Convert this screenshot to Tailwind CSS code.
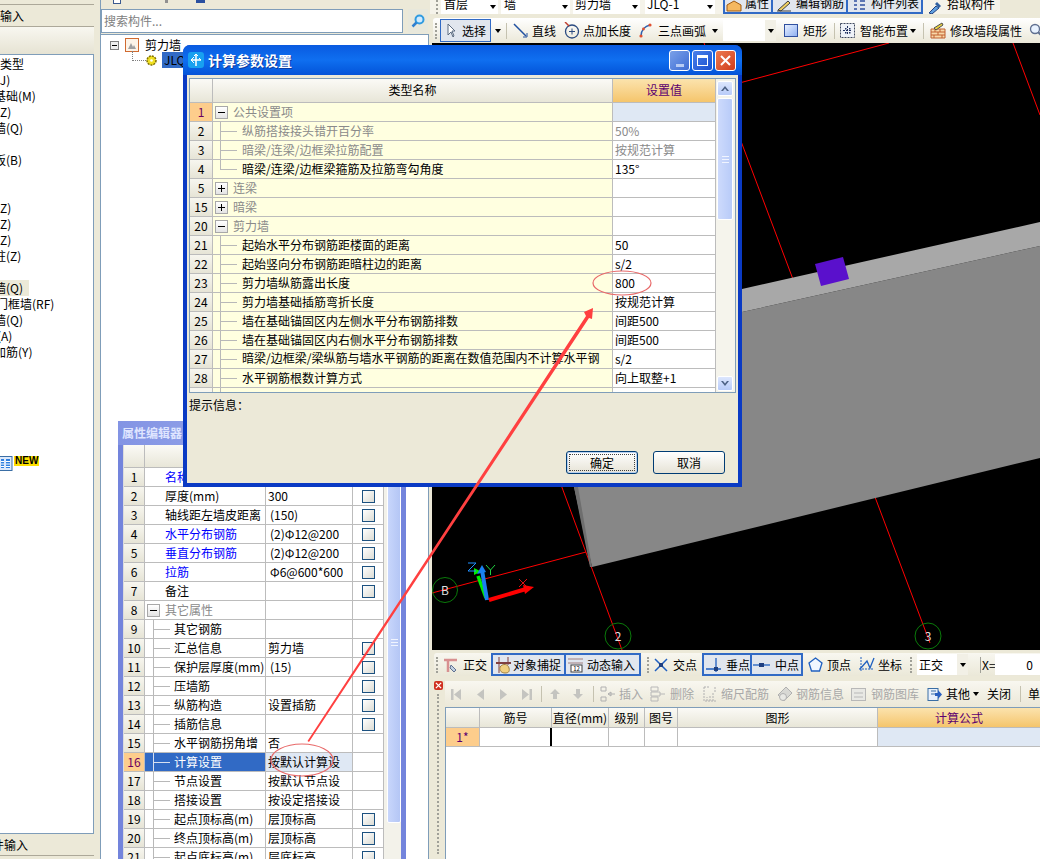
<!DOCTYPE html>
<html lang="zh">
<head>
<meta charset="utf-8">
<title>计算参数设置</title>
<script src="https://cdn.jsdelivr.net/npm/@tailwindcss/browser@4"></script>
</head>
<body>
<div class="relative flex h-[859px] w-[1040px] overflow-hidden bg-[#ece9d8] text-[12px] text-black [font-family:'Noto_Sans_CJK_SC','Liberation_Sans',sans-serif]">

  <!-- left list -->
  <aside class="flex h-full w-[101px] shrink-0">
    <div class="flex w-[94px] flex-col overflow-hidden">
      <div class="h-[5px] shrink-0 border-b border-[#aca899]"></div>
      <div class="h-[22px] shrink-0 border-b border-[#aca899] leading-[21px]">输入</div>
      <div class="h-[27px] shrink-0 bg-linear-to-b from-[#f8f7f0] to-[#e6e3d3]"></div>
      <div class="h-[780px] shrink-0 whitespace-nowrap border border-l-0 border-[#7f9db9] bg-white pt-[1px] leading-[16px]">
        <div class="h-[16px]">类型</div>
        <div class="-ml-[4px] h-[16px]">(J)</div>
        <div class="-ml-[6px] h-[16px]">基础(M)</div>
        <div class="-ml-[4px] h-[16px]">(Z)</div>
        <div class="-ml-[6px] h-[16px]">墙(Q)</div>
        <div class="h-[16px]"></div>
        <div class="-ml-[6px] h-[16px]">板(B)</div>
        <div class="h-[32px]"></div>
        <div class="-ml-[4px] h-[16px]">(Z)</div>
        <div class="-ml-[4px] h-[16px]">(Z)</div>
        <div class="-ml-[4px] h-[16px]">(Z)</div>
        <div class="-ml-[6px] h-[16px]">柱(Z)</div>
        <div class="h-[16px]"></div>
        <div class="h-[16px] w-[29px] overflow-hidden bg-[#ece9d8]"><div class="-ml-[6px]">墙(Q)</div></div>
        <div class="-ml-[4px] h-[16px]">门框墙(RF)</div>
        <div class="-ml-[6px] h-[16px]">墙(Q)</div>
        <div class="-ml-[3px] h-[16px]">(A)</div>
        <div class="-ml-[6px] h-[16px]">加筋(Y)</div>
        <div class="mt-[96px] flex items-start">
          <svg class="h-[15px] w-[13px]" viewBox="0 0 13 15"><rect x="-3" y=".5" width="15" height="14" fill="#dbe8fb" stroke="#3a6ea5"/><path d="M1 3h3v9H1zM6 3h4v9H6z" fill="#2f80e0"/><path d="M1 5.500h3M1 8h3M1 10.500h3M6 5.500h4M6 8h4M6 10.500h4" stroke="#fff"/></svg>
          <span class="ml-[1px] h-[10px] bg-[#ffe000] px-[1px] text-[10px] font-bold leading-[10px] [font-family:'Liberation_Sans',sans-serif]">NEW</span>
        </div>
      </div>
      <div class="h-[22px] shrink-0 border-b border-[#aca899] leading-[21px]"><div class="-ml-[8px]">件输入</div></div>
    </div>
    <div class="w-[7px] border-r border-[#7f9db9]"></div>
  </aside>

  <!-- component tree -->
  <section class="flex h-full w-[329px] shrink-0 flex-col">
    <div class="flex h-[9px] shrink-0 items-start">
      <span class="ml-[12px] h-[4px] w-[8px] border border-t-0 border-[#3a5a90] bg-white"></span>
      <span class="ml-[44px] h-[3px] w-[3px] bg-[#909090]"></span>
      <span class="ml-[28px] h-[3px] w-[9px] bg-[#2a50a0]"></span>
    </div>
    <div class="flex h-[25px] shrink-0">
      <div class="h-[24px] w-[302px] border border-[#7f9db9] bg-white pl-[2px] leading-[22px] text-[#808080]">搜索构件...</div>
      <div class="ml-[5px] flex h-[24px] w-[20px] items-center justify-center bg-[#e8e8dc]">
        <svg class="h-[14px] w-[14px]" viewBox="0 0 14 14"><circle cx="8.500" cy="5.500" r="4" fill="#cfeaff" stroke="#2f9be0" stroke-width="2"/><path d="M5.500 8.500 1.500 12.500" stroke="#2f80d0" stroke-width="2.500"/></svg>
      </div>
    </div>
    <div class="mr-[1px] flex-1 border-r border-t border-[#7f9db9] bg-white">
      <div class="flex h-[17px] items-center pt-[3px]">
        <span class="ml-[9px] flex h-[9px] w-[9px] items-center justify-center border border-[#808080] bg-[#eeeeee]"><span class="h-px w-[5px] bg-black"></span></span>
        <svg class="ml-[6px] h-[14px] w-[14px]" viewBox="0 0 14 14"><rect x=".5" y=".5" width="13" height="13" fill="#fdf4e8" stroke="#d06a30"/><path d="M3 11 6 5l2 4 1-2 2 4z" fill="#a0a0a0"/></svg>
        <span class="ml-[6px]">剪力墙</span>
      </div>
      <div class="flex h-[16px] items-center">
        <span class="ml-[31px] mb-[8px] h-[10px] w-[14px] border-b border-l border-dotted border-[#808080]"></span>
        <svg class="h-[11px] w-[11px]" viewBox="0 0 11 11"><circle cx="5.500" cy="5.500" r="4.500" fill="#f0e020" stroke="#807000" stroke-width="1.500" stroke-dasharray="2 1"/><circle cx="5.500" cy="5.500" r="1.300" fill="#fff"/></svg>
        <span class="ml-[5px] h-[16px] w-[40px] whitespace-nowrap bg-[#316ac5] pl-[2px] leading-[16px]">JLQ-1</span>
      </div>
    </div>
  </section>

  <!-- drawing area -->
  <main class="flex h-full w-[610px] shrink-0 flex-col">
    <div class="flex h-[14px] w-[570px] shrink-0 items-start overflow-hidden whitespace-nowrap bg-[#f5f3ea] leading-[8px]">
      <span class="ml-[6px] h-[14px] w-[2px] shrink-0 border-l-2 border-dotted border-[#a0a098]"></span>
      <div class="ml-[3px] flex h-[14px] w-[57px] shrink-0 items-center justify-between bg-white pl-[3px]"><span class="-mt-[6px]">首层</span><svg class="mr-[2px] h-[4px] w-[6px]" viewBox="0 0 6 4"><path d="M0 0h6L3 4z"/></svg></div>
      <div class="ml-[3px] flex h-[14px] w-[69px] shrink-0 items-center justify-between bg-white pl-[3px]"><span class="-mt-[6px]">墙</span><svg class="mr-[2px] h-[4px] w-[6px]" viewBox="0 0 6 4"><path d="M0 0h6L3 4z"/></svg></div>
      <div class="ml-[3px] flex h-[14px] w-[67px] shrink-0 items-center justify-between bg-white pl-[2px]"><span class="-mt-[6px]">剪力墙</span><svg class="mr-[2px] h-[4px] w-[6px]" viewBox="0 0 6 4"><path d="M0 0h6L3 4z"/></svg></div>
      <div class="ml-[5px] flex h-[14px] w-[70px] shrink-0 items-center justify-between bg-white pl-[2px]"><span class="-mt-[6px]">JLQ-1</span><svg class="mr-[2px] h-[4px] w-[6px]" viewBox="0 0 6 4"><path d="M0 0h6L3 4z"/></svg></div>
      <div class="ml-[8px] flex h-[14px] w-[50px] shrink-0 items-center border-2 border-t-0 border-[#316ac5] bg-[#e1e6ee] pl-[1px]"><svg class="h-[12px] w-[16px] shrink-0" viewBox="0 0 16 12"><path d="M1 5 8 1l7 4v6H1z" fill="#f5b860" stroke="#a05a10"/></svg><span class="-mt-[6px] ml-[3px] shrink-0">属性</span></div>
      <div class="flex h-[14px] w-[75px] shrink-0 items-center border-2 border-l-0 border-t-0 border-[#316ac5] bg-[#e1e6ee] pl-[3px]"><svg class="h-[12px] w-[16px] shrink-0" viewBox="0 0 16 12"><path d="M2 10 12 1l2 2L5 11zM1 11h14" fill="#f0d060" stroke="#404040"/></svg><span class="-mt-[6px] ml-[4px] shrink-0">编辑钢筋</span></div>
      <div class="flex h-[14px] w-[75px] shrink-0 items-center border-2 border-l-0 border-t-0 border-[#316ac5] bg-[#e1e6ee] pl-[3px]"><svg class="h-[12px] w-[16px] shrink-0" viewBox="0 0 16 12"><path d="M3 1h3M3 5h3M3 9h3M9 1h5M9 5h5M9 9h5" stroke="#3050a0" stroke-width="1.500"/></svg><span class="-mt-[6px] ml-[4px] shrink-0">构件列表</span></div>
      <div class="ml-[4px] flex h-[14px] w-[73px] shrink-0 items-center"><svg class="h-[13px] w-[16px] shrink-0" viewBox="0 0 16 13"><path d="M2 12 9 5l3 2-7 6z" fill="#60a0e0" stroke="#204080"/><path d="M10 1l4 4-2 2-4-4z" fill="#3060a0"/></svg><span class="-mt-[6px] ml-[4px] shrink-0">拾取构件</span></div>
    </div>
    <div class="ml-[3px] mt-[4px] flex h-[25px] shrink-0 items-center rounded-l-[3px] bg-linear-to-b from-[#ffffff] to-[#ebe8d8] whitespace-nowrap">
      <span class="ml-[2px] h-[16px] w-[2px] border-l-2 border-dotted border-[#a0a098]"></span>
      <div class="ml-[3px] flex h-[23px] w-[51px] shrink-0 items-center border border-[#316ac5] bg-[#e1e6ee] pl-[6px]"><svg class="h-[15px] w-[8px]" viewBox="0 0 8 15"><path d="M1 1v11l3-3 2 5 1-1-2-5h3z" fill="#fff" stroke="#5a6a80"/></svg><span class="ml-[7px]">选择</span></div>
      <svg class="ml-[4px] h-[4px] w-[6px] shrink-0" viewBox="0 0 6 4"><path d="M0 0h6L3 4z"/></svg>
      <span class="ml-[5px] h-[16px] w-px shrink-0 bg-[#c5c2b0]"></span>
      <svg class="ml-[6px] h-[15px] w-[15px] shrink-0" viewBox="0 0 15 15"><path d="M1 1l12 12" stroke="#2050a0" stroke-width="1.500"/><path d="M10 14l4 0 0-4" fill="none" stroke="#2050a0"/></svg>
      <span class="ml-[4px]">直线</span>
      <svg class="ml-[8px] h-[17px] w-[16px] shrink-0" viewBox="0 0 16 17"><circle cx="8" cy="9.500" r="6.500" fill="none" stroke="#2a4a80" stroke-width="1.300"/><path d="M8 6.500v6M5 9.500h6" stroke="#2a4a80"/><path d="M1 0l4 4" stroke="#c04030" stroke-width="1.500"/></svg>
      <span class="ml-[3px]">点加长度</span>
      <svg class="ml-[8px] h-[15px] w-[13px] shrink-0" viewBox="0 0 13 15"><path d="M2 13C2 7 6 3 11 2" fill="none" stroke="#2a60b0" stroke-width="1.500"/><circle cx="2" cy="13" r="1.600" fill="#e05030"/><circle cx="11" cy="2" r="1.600" fill="#e05030"/><circle cx="4.500" cy="6" r="1.400" fill="#e05030"/></svg>
      <span class="ml-[6px]">三点画弧</span>
      <svg class="ml-[6px] h-[4px] w-[6px] shrink-0" viewBox="0 0 6 4"><path d="M0 0h6L3 4z"/></svg>
      <div class="ml-[5px] flex h-[21px] w-[53px] shrink-0 items-center justify-end bg-white"><span class="flex h-full w-[11px] items-center justify-center bg-[#f2f0e6]"><svg class="h-[4px] w-[6px]" viewBox="0 0 6 4"><path d="M0 0h6L3 4z"/></svg></span></div>
      <span class="ml-[8px] h-[13px] w-[14px] shrink-0 border border-[#3050a0] bg-linear-to-br from-[#e8f0ff] to-[#90b0f0]"></span>
      <span class="ml-[5px]">矩形</span>
      <span class="ml-[7px] h-[16px] w-px shrink-0 bg-[#c5c2b0]"></span>
      <svg class="ml-[5px] h-[15px] w-[15px] shrink-0" viewBox="0 0 15 15"><rect x=".5" y=".5" width="14" height="14" fill="#eef2f8" stroke="#404a60" stroke-dasharray="2 1"/><path d="M7.500 3v9M3 7.500h9" stroke="#203060" stroke-dasharray="2 1"/><path d="M5 5h1.500v1.500H5zM9 5h1.500v1.500H9zM5 9h1.500v1.500H5zM9 9h1.500v1.500H9z" fill="#203060"/></svg>
      <span class="ml-[5px]">智能布置</span>
      <svg class="ml-[2px] h-[4px] w-[6px] shrink-0" viewBox="0 0 6 4"><path d="M0 0h6L3 4z"/></svg>
      <span class="ml-[7px] h-[16px] w-px shrink-0 bg-[#c5c2b0]"></span>
      <svg class="ml-[6px] h-[17px] w-[16px] shrink-0" viewBox="0 0 16 17"><path d="M1 7h14v9H1z" fill="#f8d8a8" stroke="#c06030"/><path d="M1 10h14M1 13h14M5 7v3M10 7v3M8 10v3M4 13v3M12 13v3" stroke="#c06030"/><path d="M4 6 12 1l1 2-7 5z" fill="#e8d040" stroke="#505050"/></svg>
      <span class="ml-[4px]">修改墙段属性</span>
      <svg class="ml-[7px] h-[16px] w-[14px] shrink-0" viewBox="0 0 14 16"><circle cx="6" cy="6" r="4.500" fill="#e8f2ff" stroke="#607090" stroke-width="1.300"/><path d="M9 9l5 5" stroke="#607090" stroke-width="2"/></svg>
    </div>

    <div class="ml-[2px] h-[607px] shrink-0 bg-black">
      <svg class="block h-[607px] w-[608px]" viewBox="432 43 608 607">
        <g stroke="#ff0000" fill="none">
          <path d="M742 82.300 889 43"/>
          <path d="M704 43 930 643"/>
          <path d="M1013 43 1040 115"/>
          <path d="M398 43 622 650"/>
          <path d="M432 593 586 552"/>
        </g>
        <path d="M574 487 742 312 1040 246V458L592 567Z" fill="#878787"/>
        <path d="M742 289 1040 222V246L742 312Z" fill="#a8a8a8"/>
        <path d="M574 487 590 567 592 567 578 487Z" fill="#6e6e6e"/>
        <path d="M815 264 843 257 849 279 821 286Z" fill="#5a10cc"/>
        <g fill="none" stroke="#0a7a0a">
          <circle cx="445" cy="590" r="12.500"/>
          <circle cx="618" cy="636" r="13"/>
          <circle cx="928" cy="636" r="13"/>
        </g>
        <g fill="#dddddd" font-size="12" text-anchor="middle">
          <text x="445" y="595">B</text>
          <text x="618" y="641">2</text>
          <text x="928" y="641">3</text>
        </g>
        <g fill="none">
          <path d="M486 598 478 576" stroke="#00ee00" stroke-width="3.500"/>
          <path d="M474 568 474 575 481 571.500Z" fill="#00ee00"/>
          <path d="M487 600 482 570" stroke="#1a80f0" stroke-width="4"/>
          <path d="M482 565 477 574 486 572Z" fill="#1a80f0"/>
          <path d="M489 600 526 589" stroke="#ff0000" stroke-width="4"/>
          <path d="M534 587 523 585 525 594Z" fill="#ff0000"/>
          <path d="M468 563H476L468 571H476" stroke="#2090ff"/>
          <path d="M486 565 490.500 570 495 565M490.500 570V575" stroke="#20d040"/>
          <path d="M519 579 527 587M527 579 519 587" stroke="#e01010"/>
        </g>
      </svg>
    </div>

    <div class="mt-[3px] ml-[4px] flex h-[23px] shrink-0 items-center rounded-l-[3px] bg-linear-to-b from-[#f8f7f0] to-[#ebe8d8] whitespace-nowrap">
      <span class="ml-[2px] h-[16px] w-[2px] shrink-0 border-l-2 border-dotted border-[#a0a098]"></span>
      <svg class="ml-[5px] h-[16px] w-[15px] shrink-0" viewBox="0 0 15 16"><path d="M1 3h13M5 3v12" stroke="#d89090" stroke-width="2.500"/><path d="M8 8l5 5-2 2-4-4z" fill="#c0d0e0" stroke="#607090"/></svg>
      <span class="ml-[5px]">正交</span>
      <div class="ml-[4px] flex h-[23px] w-[75px] shrink-0 items-center border-2 border-[#316ac5] bg-[#e1e6ee] pl-[2px]"><svg class="h-[18px] w-[17px] shrink-0" viewBox="0 0 17 18"><path d="M4 1v16M13 1v8" stroke="#804040"/><path d="M1 7h15" stroke="#804040" stroke-width="2"/><path d="M5 11c3-4 8-3 9 1s-1 5-4 5-6-2-5-6z" fill="#f0d080" stroke="#a08040"/></svg><span class="ml-[1px]">对象捕捉</span></div>
      <div class="flex h-[23px] w-[75px] shrink-0 items-center border-2 border-l-0 border-[#316ac5] bg-[#e1e6ee] pl-[1px]"><svg class="h-[17px] w-[17px] shrink-0" viewBox="0 0 17 17"><path d="M1 3h15M1 7h15" stroke="#a08080"/><rect x="4" y="9" width="11" height="7" fill="#fff" stroke="#404040"/><text x="9.500" y="15" font-size="6" text-anchor="middle" fill="#000">12</text></svg><span class="ml-[3px]">动态输入</span></div>
      <span class="ml-[6px] h-[16px] w-[2px] shrink-0 border-l-2 border-dotted border-[#a0a098]"></span>
      <svg class="ml-[3px] h-[18px] w-[18px] shrink-0" viewBox="0 0 18 18"><path d="M3 3l12 12M15 3 3 15" stroke="#2060c0" stroke-width="1.500"/><rect x="7" y="7" width="4" height="4" fill="#204080"/></svg>
      <span class="ml-[3px]">交点</span>
      <div class="ml-[5px] flex h-[23px] w-[50px] shrink-0 items-center border-2 border-[#316ac5] bg-[#e1e6ee] pl-[1px]"><svg class="h-[16px] w-[17px] shrink-0" viewBox="0 0 17 16"><path d="M1 12h15M11 1v14" stroke="#2060c0" stroke-width="1.300"/><rect x="9" y="10" width="4" height="4" fill="#204080"/></svg><span class="ml-[4px]">垂点</span></div>
      <div class="flex h-[23px] w-[51px] shrink-0 items-center border-2 border-l-0 border-[#316ac5] bg-[#e1e6ee] pl-[1px]"><svg class="h-[10px] w-[17px] shrink-0" viewBox="0 0 17 10"><path d="M0 5h17" stroke="#2060c0" stroke-width="1.300"/><rect x="6" y="3" width="5" height="4" fill="#204080"/></svg><span class="ml-[5px]">中点</span></div>
      <svg class="ml-[5px] h-[15px] w-[15px] shrink-0" viewBox="0 0 15 15"><path d="M7.500 1 14 6l-2.500 8h-8L1 6z" fill="#f0f6ff" stroke="#2060c0" stroke-width="1.300"/></svg>
      <span class="ml-[4px]">顶点</span>
      <svg class="ml-[7px] h-[17px] w-[17px] shrink-0" viewBox="0 0 17 17"><path d="M3 1v15M1 13h15" stroke="#2060c0" stroke-dasharray="2 1"/><path d="M2 13 9 5l3 7 4-10" fill="none" stroke="#2060c0" stroke-width="1.300"/></svg>
      <span class="ml-[3px]">坐标</span>
      <span class="ml-[8px] h-[16px] w-[2px] shrink-0 border-l-2 border-dotted border-[#a0a098]"></span>
      <div class="ml-[5px] flex h-[21px] w-[51px] shrink-0 items-center justify-between bg-white pl-[2px]"><span>正交</span><span class="flex h-full w-[11px] items-center justify-center bg-[#f2f0e6]"><svg class="h-[4px] w-[6px]" viewBox="0 0 6 4"><path d="M0 0h6L3 4z"/></svg></span></div>
      <span class="ml-[12px] h-[16px] w-px shrink-0 bg-[#a0a098]"></span>
      <span class="ml-px w-[13px] shrink-0">X=</span>
      <div class="h-[21px] flex-1 bg-white pr-[7px] text-right leading-[21px]">0</div>
    </div>

    <div class="mt-[5px] flex min-h-0 flex-1">
      <div class="w-[15px] shrink-0 pl-[4px]">
        <div class="flex h-[9px] w-[9px] items-center justify-center rounded-[2px] bg-[#d03020]"><svg class="h-[7px] w-[7px]" viewBox="0 0 8 8"><path d="M1 1l6 6M7 1 1 7" stroke="#fff" stroke-width="1.500"/></svg></div>
        <div class="ml-[3px] mt-[4px] h-[160px] w-[2px] border-l-2 border-dotted border-[#a0a098]"></div>
      </div>
      <div class="flex min-w-0 flex-1 flex-col">
        <div class="flex h-[26px] shrink-0 items-center whitespace-nowrap bg-linear-to-b from-[#f8f7f0] to-[#ebe8d8] text-[#a8a8a8]">
          <svg class="ml-[5px] h-[13px] w-[12px] shrink-0" viewBox="0 0 12 13"><path d="M1 1h2.500v11H1zM11 1v11L4 6.500z" fill="#c4c4c0"/></svg>
          <svg class="ml-[13px] h-[13px] w-[11px] shrink-0" viewBox="0 0 11 13"><path d="M9 1v11L2 6.500z" fill="#c4c4c0"/></svg>
          <svg class="ml-[12px] h-[13px] w-[11px] shrink-0" viewBox="0 0 11 13"><path d="M2 1v11l7-5.500z" fill="#c4c4c0"/></svg>
          <svg class="ml-[12px] h-[13px] w-[12px] shrink-0" viewBox="0 0 12 13"><path d="M1 1v11l7-5.500zM8.500 1H11v11H8.500z" fill="#c4c4c0"/></svg>
          <span class="ml-[8px] h-[16px] w-px shrink-0 bg-[#c5c2b0]"></span>
          <svg class="ml-[7px] h-[12px] w-[12px] shrink-0" viewBox="0 0 12 12"><path d="M6 1 11 6H8v5H4V6H1z" fill="#c4c4c0"/></svg>
          <svg class="ml-[11px] h-[12px] w-[12px] shrink-0" viewBox="0 0 12 12"><path d="M6 11 11 6H8V1H4v5H1z" fill="#c4c4c0"/></svg>
          <span class="ml-[9px] h-[16px] w-px shrink-0 bg-[#c5c2b0]"></span>
          <svg class="ml-[6px] h-[16px] w-[16px] shrink-0" viewBox="0 0 16 16"><path d="M1 1h5v4H1zM1 11h5v4H1zM8 8h7M8 8l3-2v4z" fill="none" stroke="#b0b0b0"/></svg>
          <span class="ml-[3px]">插入</span>
          <svg class="ml-[7px] h-[16px] w-[15px] shrink-0" viewBox="0 0 15 16"><path d="M1 1h7v4H1zM1 11h7v4H1zM1 6h9v4H1zM10 8h5" fill="none" stroke="#b8b8b8"/></svg>
          <span class="ml-[5px]">删除</span>
          <svg class="ml-[9px] h-[16px] w-[14px] shrink-0" viewBox="0 0 14 16"><path d="M1 1v14h12M4 15v-4M7 15v-6M10 15v-8M1 1h6M12 1v5" fill="none" stroke="#b0b0b0" stroke-dasharray="2 1"/></svg>
          <span class="ml-[4px]">缩尺配筋</span>
          <svg class="ml-[8px] h-[16px] w-[16px] shrink-0" viewBox="0 0 16 16"><path d="M1 9 9 1l6 6-8 8z" fill="#d8d8d4" stroke="#b0b0b0"/><circle cx="6" cy="11" r="3.500" fill="#e8e8e4" stroke="#b0b0b0"/></svg>
          <span class="ml-[3px]">钢筋信息</span>
          <svg class="ml-[7px] h-[15px] w-[15px] shrink-0" viewBox="0 0 15 15"><rect x=".5" y="1.500" width="14" height="12" fill="#e8e8e4" stroke="#b8b8b8"/><path d="M3 6h9M3 10h9" stroke="#b8b8b8"/></svg>
          <span class="ml-[5px]">钢筋图库</span>
          <svg class="ml-[8px] h-[15px] w-[15px] shrink-0" viewBox="0 0 15 15"><rect x="1" y="1.500" width="10" height="12" fill="#e8f0fc" stroke="#3a6ea5"/><path d="M4 4h5M4 7h5" stroke="#3a6ea5"/><path d="M8 6h3V3l4 4.500-4 4.500V9H8z" fill="#2a60c0"/></svg>
          <span class="ml-[4px] text-black">其他</span>
          <svg class="ml-[3px] h-[4px] w-[6px] shrink-0" viewBox="0 0 6 4"><path d="M0 0h6L3 4z"/></svg>
          <span class="ml-[8px] text-black">关闭</span>
          <span class="ml-[9px] h-[16px] w-px shrink-0 bg-[#c5c2b0]"></span>
          <span class="ml-[7px] text-black">单</span>
        </div>
        <div class="flex-1 border-l border-t border-[#7f9db9] bg-white">
          <div class="flex h-[20px] border-b border-[#bcbcbc] text-center leading-[19px]">
            <div class="w-[34px] shrink-0 border-r border-[#bcbcbc] bg-linear-to-b from-[#fbfaf6] to-[#e8e6d8]"></div>
            <div class="w-[72px] shrink-0 border-r border-[#bcbcbc] bg-linear-to-b from-[#fbfaf6] to-[#e8e6d8]">筋号</div>
            <div class="w-[57px] shrink-0 whitespace-nowrap border-r border-[#bcbcbc] bg-linear-to-b from-[#fbfaf6] to-[#e8e6d8]">直径(mm)</div>
            <div class="w-[36px] shrink-0 border-r border-[#bcbcbc] bg-linear-to-b from-[#fbfaf6] to-[#e8e6d8]">级别</div>
            <div class="w-[33px] shrink-0 border-r border-[#bcbcbc] bg-linear-to-b from-[#fbfaf6] to-[#e8e6d8]">图号</div>
            <div class="w-[200px] shrink-0 border-r border-[#bcbcbc] bg-linear-to-b from-[#fbfaf6] to-[#e8e6d8]">图形</div>
            <div class="flex-1 bg-linear-to-b from-[#fbe3ad] to-[#f5c56b] text-[#5c0070]">计算公式</div>
          </div>
          <div class="flex h-[19px] border-b border-[#bcbcbc] text-center leading-[18px]">
            <div class="w-[34px] shrink-0 border-r border-[#bcbcbc] bg-[#fdcd8c] text-[#5c0070]">1*</div>
            <div class="w-[72px] shrink-0 border-r-2 border-black"></div>
            <div class="w-[57px] shrink-0 border-r border-[#bcbcbc]"></div>
            <div class="w-[36px] shrink-0 border-r border-[#bcbcbc]"></div>
            <div class="w-[33px] shrink-0 border-r border-[#bcbcbc]"></div>
            <div class="w-[200px] shrink-0 border-r border-[#bcbcbc]"></div>
            <div class="flex-1 bg-[#dfe8f4]"></div>
          </div>
        </div>
      </div>
    </div>
  </main>

  <!-- property editor window -->
  <div class="absolute left-[118px] top-[421px] flex h-[440px] w-[288px] flex-col bg-[#7384dc]">
    <div class="h-[24px] shrink-0 bg-linear-to-r from-[#8394e4] to-[#aab6ee] pl-[4px] text-[12px] font-bold leading-[24px] text-[#dfe5ff]">属性编辑器</div>
    <div class="ml-[5px] flex min-h-0 flex-1 bg-[#f3f2ea]">
      <div class="w-[261px] shrink-0 border-l border-[#dcdcdc] bg-white leading-[18px] whitespace-nowrap">
        <div class="flex h-[23px] border-b border-[#bcbcbc]">
          <div class="w-[21px] shrink-0 border-r border-[#bcbcbc] bg-linear-to-b from-[#fbfaf6] to-[#e8e6d8]"></div>
          <div class="flex-1 bg-linear-to-b from-[#fbfaf6] to-[#e8e6d8]"></div>
        </div>
        <div class="flex h-[19px] border-b border-[#bcbcbc]"><div class="w-[21px] shrink-0 border-r border-[#bcbcbc] bg-linear-to-b from-[#f7f6ef] to-[#e6e4d6] text-center">1</div><div class="w-[121px] shrink-0 border-r border-[#bcbcbc] pl-[20px] text-[#0000ff]">名称</div><div class="w-[87px] shrink-0 border-r border-[#bcbcbc]"></div><div class="w-[31px] shrink-0 border-r border-[#bcbcbc]"></div></div>
        <div class="flex h-[19px] border-b border-[#bcbcbc]"><div class="w-[21px] shrink-0 border-r border-[#bcbcbc] bg-linear-to-b from-[#f7f6ef] to-[#e6e4d6] text-center">2</div><div class="w-[121px] shrink-0 border-r border-[#bcbcbc] pl-[20px]">厚度(mm)</div><div class="w-[87px] shrink-0 border-r border-[#bcbcbc] pl-[2px]">300</div><div class="flex w-[31px] shrink-0 items-center justify-center border-r border-[#bcbcbc]"><span class="h-[13px] w-[13px] border border-[#1c5180] bg-linear-to-br from-white to-[#dcdcd4]"></span></div></div>
        <div class="flex h-[19px] border-b border-[#bcbcbc]"><div class="w-[21px] shrink-0 border-r border-[#bcbcbc] bg-linear-to-b from-[#f7f6ef] to-[#e6e4d6] text-center">3</div><div class="w-[121px] shrink-0 overflow-hidden border-r border-[#bcbcbc] pl-[20px]">轴线距左墙皮距离</div><div class="w-[87px] shrink-0 border-r border-[#bcbcbc] pl-[4px]">(150)</div><div class="flex w-[31px] shrink-0 items-center justify-center border-r border-[#bcbcbc]"><span class="h-[13px] w-[13px] border border-[#1c5180] bg-linear-to-br from-white to-[#dcdcd4]"></span></div></div>
        <div class="flex h-[19px] border-b border-[#bcbcbc]"><div class="w-[21px] shrink-0 border-r border-[#bcbcbc] bg-linear-to-b from-[#f7f6ef] to-[#e6e4d6] text-center">4</div><div class="w-[121px] shrink-0 border-r border-[#bcbcbc] pl-[20px] text-[#0000ff]">水平分布钢筋</div><div class="w-[87px] shrink-0 border-r border-[#bcbcbc] pl-[4px]">(2)Φ12@200</div><div class="flex w-[31px] shrink-0 items-center justify-center border-r border-[#bcbcbc]"><span class="h-[13px] w-[13px] border border-[#1c5180] bg-linear-to-br from-white to-[#dcdcd4]"></span></div></div>
        <div class="flex h-[19px] border-b border-[#bcbcbc]"><div class="w-[21px] shrink-0 border-r border-[#bcbcbc] bg-linear-to-b from-[#f7f6ef] to-[#e6e4d6] text-center">5</div><div class="w-[121px] shrink-0 border-r border-[#bcbcbc] pl-[20px] text-[#0000ff]">垂直分布钢筋</div><div class="w-[87px] shrink-0 border-r border-[#bcbcbc] pl-[4px]">(2)Φ12@200</div><div class="flex w-[31px] shrink-0 items-center justify-center border-r border-[#bcbcbc]"><span class="h-[13px] w-[13px] border border-[#1c5180] bg-linear-to-br from-white to-[#dcdcd4]"></span></div></div>
        <div class="flex h-[19px] border-b border-[#bcbcbc]"><div class="w-[21px] shrink-0 border-r border-[#bcbcbc] bg-linear-to-b from-[#f7f6ef] to-[#e6e4d6] text-center">6</div><div class="w-[121px] shrink-0 border-r border-[#bcbcbc] pl-[20px] text-[#0000ff]">拉筋</div><div class="w-[87px] shrink-0 border-r border-[#bcbcbc] pl-[4px]">Φ6@600*600</div><div class="flex w-[31px] shrink-0 items-center justify-center border-r border-[#bcbcbc]"><span class="h-[13px] w-[13px] border border-[#1c5180] bg-linear-to-br from-white to-[#dcdcd4]"></span></div></div>
        <div class="flex h-[19px] border-b border-[#bcbcbc]"><div class="w-[21px] shrink-0 border-r border-[#bcbcbc] bg-linear-to-b from-[#f7f6ef] to-[#e6e4d6] text-center">7</div><div class="w-[121px] shrink-0 border-r border-[#bcbcbc] pl-[20px]">备注</div><div class="w-[87px] shrink-0 border-r border-[#bcbcbc]"></div><div class="flex w-[31px] shrink-0 items-center justify-center border-r border-[#bcbcbc]"><span class="h-[13px] w-[13px] border border-[#1c5180] bg-linear-to-br from-white to-[#dcdcd4]"></span></div></div>
        <div class="flex h-[19px] border-b border-[#bcbcbc]"><div class="w-[21px] shrink-0 border-r border-[#bcbcbc] bg-linear-to-b from-[#f7f6ef] to-[#e6e4d6] text-center">8</div><div class="flex w-[121px] shrink-0 items-center border-r border-[#bcbcbc] text-[#8a8a8a]"><span class="ml-[2px] mr-[5px] flex h-[13px] w-[13px] shrink-0 items-center justify-center border border-[#a8a8a8] bg-linear-to-b from-white to-[#e4e4e4]"><span class="h-px w-[7px] bg-black"></span></span>其它属性</div><div class="w-[87px] shrink-0 border-r border-[#bcbcbc]"></div><div class="w-[31px] shrink-0 border-r border-[#bcbcbc]"></div></div>
        <div class="flex h-[19px] border-b border-[#bcbcbc]"><div class="w-[21px] shrink-0 border-r border-[#bcbcbc] bg-linear-to-b from-[#f7f6ef] to-[#e6e4d6] text-center">9</div><div class="flex w-[121px] shrink-0 border-r border-[#bcbcbc]"><span class="ml-[8px] mr-[4px] h-full w-[17px] shrink-0 border-l border-[#b8b8b8] bg-[linear-gradient(#b8b8b8,#b8b8b8)] bg-[length:100%_1px] bg-[position:0_9px] bg-no-repeat"></span>其它钢筋</div><div class="w-[87px] shrink-0 border-r border-[#bcbcbc]"></div><div class="w-[31px] shrink-0 border-r border-[#bcbcbc]"></div></div>
        <div class="flex h-[19px] border-b border-[#bcbcbc]"><div class="w-[21px] shrink-0 border-r border-[#bcbcbc] bg-linear-to-b from-[#f7f6ef] to-[#e6e4d6] text-center">10</div><div class="flex w-[121px] shrink-0 border-r border-[#bcbcbc]"><span class="ml-[8px] mr-[4px] h-full w-[17px] shrink-0 border-l border-[#b8b8b8] bg-[linear-gradient(#b8b8b8,#b8b8b8)] bg-[length:100%_1px] bg-[position:0_9px] bg-no-repeat"></span>汇总信息</div><div class="w-[87px] shrink-0 border-r border-[#bcbcbc] pl-[2px]">剪力墙</div><div class="flex w-[31px] shrink-0 items-center justify-center border-r border-[#bcbcbc]"><span class="h-[13px] w-[13px] border border-[#1c5180] bg-linear-to-br from-white to-[#dcdcd4]"></span></div></div>
        <div class="flex h-[19px] border-b border-[#bcbcbc]"><div class="w-[21px] shrink-0 border-r border-[#bcbcbc] bg-linear-to-b from-[#f7f6ef] to-[#e6e4d6] text-center">11</div><div class="flex w-[121px] shrink-0 overflow-hidden border-r border-[#bcbcbc]"><span class="ml-[8px] mr-[4px] h-full w-[17px] shrink-0 border-l border-[#b8b8b8] bg-[linear-gradient(#b8b8b8,#b8b8b8)] bg-[length:100%_1px] bg-[position:0_9px] bg-no-repeat"></span>保护层厚度(mm)</div><div class="w-[87px] shrink-0 border-r border-[#bcbcbc] pl-[4px]">(15)</div><div class="flex w-[31px] shrink-0 items-center justify-center border-r border-[#bcbcbc]"><span class="h-[13px] w-[13px] border border-[#1c5180] bg-linear-to-br from-white to-[#dcdcd4]"></span></div></div>
        <div class="flex h-[19px] border-b border-[#bcbcbc]"><div class="w-[21px] shrink-0 border-r border-[#bcbcbc] bg-linear-to-b from-[#f7f6ef] to-[#e6e4d6] text-center">12</div><div class="flex w-[121px] shrink-0 border-r border-[#bcbcbc]"><span class="ml-[8px] mr-[4px] h-full w-[17px] shrink-0 border-l border-[#b8b8b8] bg-[linear-gradient(#b8b8b8,#b8b8b8)] bg-[length:100%_1px] bg-[position:0_9px] bg-no-repeat"></span>压墙筋</div><div class="w-[87px] shrink-0 border-r border-[#bcbcbc]"></div><div class="flex w-[31px] shrink-0 items-center justify-center border-r border-[#bcbcbc]"><span class="h-[13px] w-[13px] border border-[#1c5180] bg-linear-to-br from-white to-[#dcdcd4]"></span></div></div>
        <div class="flex h-[19px] border-b border-[#bcbcbc]"><div class="w-[21px] shrink-0 border-r border-[#bcbcbc] bg-linear-to-b from-[#f7f6ef] to-[#e6e4d6] text-center">13</div><div class="flex w-[121px] shrink-0 border-r border-[#bcbcbc]"><span class="ml-[8px] mr-[4px] h-full w-[17px] shrink-0 border-l border-[#b8b8b8] bg-[linear-gradient(#b8b8b8,#b8b8b8)] bg-[length:100%_1px] bg-[position:0_9px] bg-no-repeat"></span>纵筋构造</div><div class="w-[87px] shrink-0 border-r border-[#bcbcbc] pl-[2px]">设置插筋</div><div class="flex w-[31px] shrink-0 items-center justify-center border-r border-[#bcbcbc]"><span class="h-[13px] w-[13px] border border-[#1c5180] bg-linear-to-br from-white to-[#dcdcd4]"></span></div></div>
        <div class="flex h-[19px] border-b border-[#bcbcbc]"><div class="w-[21px] shrink-0 border-r border-[#bcbcbc] bg-linear-to-b from-[#f7f6ef] to-[#e6e4d6] text-center">14</div><div class="flex w-[121px] shrink-0 border-r border-[#bcbcbc]"><span class="ml-[8px] mr-[4px] h-full w-[17px] shrink-0 border-l border-[#b8b8b8] bg-[linear-gradient(#b8b8b8,#b8b8b8)] bg-[length:100%_1px] bg-[position:0_9px] bg-no-repeat"></span>插筋信息</div><div class="w-[87px] shrink-0 border-r border-[#bcbcbc]"></div><div class="flex w-[31px] shrink-0 items-center justify-center border-r border-[#bcbcbc]"><span class="h-[13px] w-[13px] border border-[#1c5180] bg-linear-to-br from-white to-[#dcdcd4]"></span></div></div>
        <div class="flex h-[19px] border-b border-[#bcbcbc]"><div class="w-[21px] shrink-0 border-r border-[#bcbcbc] bg-linear-to-b from-[#f7f6ef] to-[#e6e4d6] text-center">15</div><div class="flex w-[121px] shrink-0 overflow-hidden border-r border-[#bcbcbc]"><span class="ml-[8px] mr-[4px] h-full w-[17px] shrink-0 border-l border-[#b8b8b8] bg-[linear-gradient(#b8b8b8,#b8b8b8)] bg-[length:100%_1px] bg-[position:0_9px] bg-no-repeat"></span>水平钢筋拐角增</div><div class="w-[87px] shrink-0 border-r border-[#bcbcbc] pl-[2px]">否</div><div class="w-[31px] shrink-0 border-r border-[#bcbcbc]"></div></div>
        <div class="flex h-[19px] border-b border-[#bcbcbc]"><div class="w-[21px] shrink-0 border-r border-[#bcbcbc] bg-[#fdcd8c] text-center text-[#6b0060]">16</div><div class="flex w-[121px] shrink-0 border-r border-[#bcbcbc] bg-[#316ac5] text-white"><span class="ml-[8px] mr-[4px] h-full w-[17px] shrink-0 border-l border-[#d8e0f0] bg-[linear-gradient(#d8e0f0,#d8e0f0)] bg-[length:100%_1px] bg-[position:0_9px] bg-no-repeat"></span>计算设置</div><div class="w-[87px] shrink-0 border-r border-[#bcbcbc] bg-[#dfe8f4] pl-[2px]">按默认计算设</div><div class="w-[31px] shrink-0 border-r border-[#bcbcbc]"></div></div>
        <div class="flex h-[19px] border-b border-[#bcbcbc]"><div class="w-[21px] shrink-0 border-r border-[#bcbcbc] bg-linear-to-b from-[#f7f6ef] to-[#e6e4d6] text-center">17</div><div class="flex w-[121px] shrink-0 border-r border-[#bcbcbc]"><span class="ml-[8px] mr-[4px] h-full w-[17px] shrink-0 border-l border-[#b8b8b8] bg-[linear-gradient(#b8b8b8,#b8b8b8)] bg-[length:100%_1px] bg-[position:0_9px] bg-no-repeat"></span>节点设置</div><div class="w-[87px] shrink-0 border-r border-[#bcbcbc] pl-[2px]">按默认节点设</div><div class="w-[31px] shrink-0 border-r border-[#bcbcbc]"></div></div>
        <div class="flex h-[19px] border-b border-[#bcbcbc]"><div class="w-[21px] shrink-0 border-r border-[#bcbcbc] bg-linear-to-b from-[#f7f6ef] to-[#e6e4d6] text-center">18</div><div class="flex w-[121px] shrink-0 border-r border-[#bcbcbc]"><span class="ml-[8px] mr-[4px] h-full w-[17px] shrink-0 border-l border-[#b8b8b8] bg-[linear-gradient(#b8b8b8,#b8b8b8)] bg-[length:100%_1px] bg-[position:0_9px] bg-no-repeat"></span>搭接设置</div><div class="w-[87px] shrink-0 border-r border-[#bcbcbc] pl-[2px]">按设定搭接设</div><div class="w-[31px] shrink-0 border-r border-[#bcbcbc]"></div></div>
        <div class="flex h-[19px] border-b border-[#bcbcbc]"><div class="w-[21px] shrink-0 border-r border-[#bcbcbc] bg-linear-to-b from-[#f7f6ef] to-[#e6e4d6] text-center">19</div><div class="flex w-[121px] shrink-0 border-r border-[#bcbcbc]"><span class="ml-[8px] mr-[4px] h-full w-[17px] shrink-0 border-l border-[#b8b8b8] bg-[linear-gradient(#b8b8b8,#b8b8b8)] bg-[length:100%_1px] bg-[position:0_9px] bg-no-repeat"></span>起点顶标高(m)</div><div class="w-[87px] shrink-0 border-r border-[#bcbcbc] pl-[2px]">层顶标高</div><div class="flex w-[31px] shrink-0 items-center justify-center border-r border-[#bcbcbc]"><span class="h-[13px] w-[13px] border border-[#1c5180] bg-linear-to-br from-white to-[#dcdcd4]"></span></div></div>
        <div class="flex h-[19px] border-b border-[#bcbcbc]"><div class="w-[21px] shrink-0 border-r border-[#bcbcbc] bg-linear-to-b from-[#f7f6ef] to-[#e6e4d6] text-center">20</div><div class="flex w-[121px] shrink-0 border-r border-[#bcbcbc]"><span class="ml-[8px] mr-[4px] h-full w-[17px] shrink-0 border-l border-[#b8b8b8] bg-[linear-gradient(#b8b8b8,#b8b8b8)] bg-[length:100%_1px] bg-[position:0_9px] bg-no-repeat"></span>终点顶标高(m)</div><div class="w-[87px] shrink-0 border-r border-[#bcbcbc] pl-[2px]">层顶标高</div><div class="flex w-[31px] shrink-0 items-center justify-center border-r border-[#bcbcbc]"><span class="h-[13px] w-[13px] border border-[#1c5180] bg-linear-to-br from-white to-[#dcdcd4]"></span></div></div>
        <div class="flex h-[19px] border-b border-[#bcbcbc]"><div class="w-[21px] shrink-0 border-r border-[#bcbcbc] bg-linear-to-b from-[#f7f6ef] to-[#e6e4d6] text-center">21</div><div class="flex w-[121px] shrink-0 border-r border-[#bcbcbc]"><span class="ml-[8px] mr-[4px] h-full w-[17px] shrink-0 border-l border-[#b8b8b8] bg-[linear-gradient(#b8b8b8,#b8b8b8)] bg-[length:100%_1px] bg-[position:0_9px] bg-no-repeat"></span>起点底标高(m)</div><div class="w-[87px] shrink-0 border-r border-[#bcbcbc] pl-[2px]">层底标高</div><div class="flex w-[31px] shrink-0 items-center justify-center border-r border-[#bcbcbc]"><span class="h-[13px] w-[13px] border border-[#1c5180] bg-linear-to-br from-white to-[#dcdcd4]"></span></div></div>
      </div>
      <div class="ml-[3px] flex w-[14px] shrink-0 flex-col">
        <div class="flex h-[378px] flex-col items-center justify-end rounded-[2px] border border-white bg-linear-to-r from-[#c8d6fb] to-[#b4c6f5] pb-[176px]">
          <span class="h-[7px] w-[7px] border-y border-[#f0f4ff] bg-[linear-gradient(#f0f4ff,#f0f4ff)] bg-[length:100%_1px] bg-[position:0_2px] bg-no-repeat"></span>
        </div>
      </div>
      <div class="flex-1 bg-[#7384dc]"></div>
    </div>
  </div>

  <!-- parameter dialog -->
  <div class="absolute left-[183px] top-[45px] flex h-[442px] w-[559px] flex-col rounded-t-[7px] bg-[#0a3ac4]">
    <div class="flex h-[30px] shrink-0 items-center rounded-t-[7px] bg-linear-to-b from-[#0a5ae0] via-[#0f6ff0] to-[#0553d8] pl-[5px]">
      <svg class="h-[16px] w-[16px] shrink-0" viewBox="0 0 16 16"><rect width="16" height="16" rx="3" fill="#18a0f0"/><path d="M8 2v12M3 8h10" stroke="#fff" stroke-width="1.500" fill="none"/><path d="M3 8l3-3M3 8l3 3M13 8l-2-2M8 2 6 4M8 2l2 2" stroke="#fff" fill="none"/></svg>
      <span class="ml-[4px] text-[14px] font-bold text-white [text-shadow:1px_1px_0_#0a3aa0]">计算参数设置</span>
      <div class="ml-auto mr-[6px] flex gap-[2px]">
        <span class="flex h-[21px] w-[21px] items-end justify-center rounded-[3px] border border-white bg-linear-to-br from-[#7aa0e8] to-[#3e6cd4] pb-[3px]"><span class="h-[3px] w-[8px] bg-[#b8ccf4]"></span></span>
        <span class="flex h-[21px] w-[21px] items-center justify-center rounded-[3px] border border-white bg-linear-to-br from-[#4a80ea] to-[#1a50d0]"><span class="h-[11px] w-[11px] border border-t-[3px] border-white"></span></span>
        <span class="flex h-[21px] w-[21px] items-center justify-center rounded-[3px] border border-white bg-linear-to-br from-[#ec7a50] to-[#d03a18]"><svg class="h-[11px] w-[11px]" viewBox="0 0 11 11"><path d="M1 1l9 9M10 1l-9 9" stroke="#fff" stroke-width="2"/></svg></span>
      </div>
    </div>
    <div class="mx-[4px] mb-[4px] flex min-h-0 flex-1 flex-col bg-[#ece9d8] pl-[2px] pt-[3px]">
      <div class="flex h-[315px] w-[547px] shrink-0 overflow-hidden border border-[#7f9db9] bg-white leading-[18px] whitespace-nowrap">
        <div class="w-[525px] shrink-0">
          <div class="flex h-[24px] border-b border-[#bcbcbc]">
            <div class="w-[23px] shrink-0 border-r border-[#bcbcbc] bg-linear-to-b from-[#fbfaf6] to-[#e8e6d8]"></div>
            <div class="w-[400px] shrink-0 border-r border-[#bcbcbc] bg-linear-to-b from-[#fbfaf6] to-[#e8e6d8] text-center leading-[22px]">类型名称</div>
            <div class="flex-1 bg-linear-to-b from-[#fbe3ad] to-[#f5c56b] text-center leading-[22px] text-[#5c0070]">设置值</div>
          </div>
          <div class="flex h-[19px] border-b border-[#bcbcbc]"><div class="w-[23px] shrink-0 border-r border-[#bcbcbc] bg-[#fdcd8c] text-center text-[#6b0060]">1</div><div class="flex w-[400px] shrink-0 items-center border-r border-[#bcbcbc] bg-[#ffffe0] text-[#8a8a8a]"><span class="ml-[2px] mr-[5px] flex h-[13px] w-[13px] shrink-0 items-center justify-center border border-[#a8a8a8] bg-linear-to-b from-white to-[#e4e4e4]"><span class="h-px w-[7px] bg-black"></span></span>公共设置项</div><div class="flex-1 bg-[#dfe8f4]"></div></div>
          <div class="flex h-[19px] border-b border-[#bcbcbc]"><div class="w-[23px] shrink-0 border-r border-[#bcbcbc] bg-linear-to-b from-[#f7f6ef] to-[#e6e4d6] text-center">2</div><div class="flex w-[400px] shrink-0 border-r border-[#bcbcbc] bg-[#ffffe0] text-[#8a8a8a]"><span class="ml-[7px] mr-[5px] h-full w-[17px] shrink-0 border-l border-[#b8b8b8] bg-[linear-gradient(#b8b8b8,#b8b8b8)] bg-[length:100%_1px] bg-[position:0_9px] bg-no-repeat"></span>纵筋搭接接头错开百分率</div><div class="flex-1 pl-[2px] text-[#8a8a8a]">50%</div></div>
          <div class="flex h-[19px] border-b border-[#bcbcbc]"><div class="w-[23px] shrink-0 border-r border-[#bcbcbc] bg-linear-to-b from-[#f7f6ef] to-[#e6e4d6] text-center">3</div><div class="flex w-[400px] shrink-0 border-r border-[#bcbcbc] bg-[#ffffe0] text-[#8a8a8a]"><span class="ml-[7px] mr-[5px] h-full w-[17px] shrink-0 border-l border-[#b8b8b8] bg-[linear-gradient(#b8b8b8,#b8b8b8)] bg-[length:100%_1px] bg-[position:0_9px] bg-no-repeat"></span>暗梁/连梁/边框梁拉筋配置</div><div class="flex-1 pl-[2px] text-[#8a8a8a]">按规范计算</div></div>
          <div class="flex h-[19px] border-b border-[#bcbcbc]"><div class="w-[23px] shrink-0 border-r border-[#bcbcbc] bg-linear-to-b from-[#f7f6ef] to-[#e6e4d6] text-center">4</div><div class="flex w-[400px] shrink-0 border-r border-[#bcbcbc] bg-[#ffffe0]"><span class="ml-[7px] mr-[5px] h-[10px] w-[17px] shrink-0 border-b border-l border-[#b8b8b8]"></span>暗梁/连梁/边框梁箍筋及拉筋弯勾角度</div><div class="flex-1 pl-[2px]">135°</div></div>
          <div class="flex h-[19px] border-b border-[#bcbcbc]"><div class="w-[23px] shrink-0 border-r border-[#bcbcbc] bg-linear-to-b from-[#f7f6ef] to-[#e6e4d6] text-center">5</div><div class="flex w-[400px] shrink-0 items-center border-r border-[#bcbcbc] bg-[#ffffe0] text-[#8a8a8a]"><span class="relative ml-[2px] mr-[5px] flex h-[13px] w-[13px] shrink-0 items-center justify-center border border-[#a8a8a8] bg-linear-to-b from-white to-[#e4e4e4]"><span class="h-px w-[7px] bg-black"></span><span class="absolute h-[7px] w-px bg-black"></span></span>连梁</div><div class="flex-1"></div></div>
          <div class="flex h-[19px] border-b border-[#bcbcbc]"><div class="w-[23px] shrink-0 border-r border-[#bcbcbc] bg-linear-to-b from-[#f7f6ef] to-[#e6e4d6] text-center">15</div><div class="flex w-[400px] shrink-0 items-center border-r border-[#bcbcbc] bg-[#ffffe0] text-[#8a8a8a]"><span class="relative ml-[2px] mr-[5px] flex h-[13px] w-[13px] shrink-0 items-center justify-center border border-[#a8a8a8] bg-linear-to-b from-white to-[#e4e4e4]"><span class="h-px w-[7px] bg-black"></span><span class="absolute h-[7px] w-px bg-black"></span></span>暗梁</div><div class="flex-1"></div></div>
          <div class="flex h-[19px] border-b border-[#bcbcbc]"><div class="w-[23px] shrink-0 border-r border-[#bcbcbc] bg-linear-to-b from-[#f7f6ef] to-[#e6e4d6] text-center">20</div><div class="flex w-[400px] shrink-0 items-center border-r border-[#bcbcbc] bg-[#ffffe0] text-[#8a8a8a]"><span class="ml-[2px] mr-[5px] flex h-[13px] w-[13px] shrink-0 items-center justify-center border border-[#a8a8a8] bg-linear-to-b from-white to-[#e4e4e4]"><span class="h-px w-[7px] bg-black"></span></span>剪力墙</div><div class="flex-1"></div></div>
          <div class="flex h-[19px] border-b border-[#bcbcbc]"><div class="w-[23px] shrink-0 border-r border-[#bcbcbc] bg-linear-to-b from-[#f7f6ef] to-[#e6e4d6] text-center">21</div><div class="flex w-[400px] shrink-0 border-r border-[#bcbcbc] bg-[#ffffe0]"><span class="ml-[7px] mr-[5px] h-full w-[17px] shrink-0 border-l border-[#b8b8b8] bg-[linear-gradient(#b8b8b8,#b8b8b8)] bg-[length:100%_1px] bg-[position:0_9px] bg-no-repeat"></span>起始水平分布钢筋距楼面的距离</div><div class="flex-1 pl-[2px]">50</div></div>
          <div class="flex h-[19px] border-b border-[#bcbcbc]"><div class="w-[23px] shrink-0 border-r border-[#bcbcbc] bg-linear-to-b from-[#f7f6ef] to-[#e6e4d6] text-center">22</div><div class="flex w-[400px] shrink-0 border-r border-[#bcbcbc] bg-[#ffffe0]"><span class="ml-[7px] mr-[5px] h-full w-[17px] shrink-0 border-l border-[#b8b8b8] bg-[linear-gradient(#b8b8b8,#b8b8b8)] bg-[length:100%_1px] bg-[position:0_9px] bg-no-repeat"></span>起始竖向分布钢筋距暗柱边的距离</div><div class="flex-1 pl-[2px]">s/2</div></div>
          <div class="flex h-[19px] border-b border-[#bcbcbc]"><div class="w-[23px] shrink-0 border-r border-[#bcbcbc] bg-linear-to-b from-[#f7f6ef] to-[#e6e4d6] text-center">23</div><div class="flex w-[400px] shrink-0 border-r border-[#bcbcbc] bg-[#ffffe0]"><span class="ml-[7px] mr-[5px] h-full w-[17px] shrink-0 border-l border-[#b8b8b8] bg-[linear-gradient(#b8b8b8,#b8b8b8)] bg-[length:100%_1px] bg-[position:0_9px] bg-no-repeat"></span>剪力墙纵筋露出长度</div><div class="flex-1 pl-[2px]">800</div></div>
          <div class="flex h-[19px] border-b border-[#bcbcbc]"><div class="w-[23px] shrink-0 border-r border-[#bcbcbc] bg-linear-to-b from-[#f7f6ef] to-[#e6e4d6] text-center">24</div><div class="flex w-[400px] shrink-0 border-r border-[#bcbcbc] bg-[#ffffe0]"><span class="ml-[7px] mr-[5px] h-full w-[17px] shrink-0 border-l border-[#b8b8b8] bg-[linear-gradient(#b8b8b8,#b8b8b8)] bg-[length:100%_1px] bg-[position:0_9px] bg-no-repeat"></span>剪力墙基础插筋弯折长度</div><div class="flex-1 pl-[2px]">按规范计算</div></div>
          <div class="flex h-[19px] border-b border-[#bcbcbc]"><div class="w-[23px] shrink-0 border-r border-[#bcbcbc] bg-linear-to-b from-[#f7f6ef] to-[#e6e4d6] text-center">25</div><div class="flex w-[400px] shrink-0 border-r border-[#bcbcbc] bg-[#ffffe0]"><span class="ml-[7px] mr-[5px] h-full w-[17px] shrink-0 border-l border-[#b8b8b8] bg-[linear-gradient(#b8b8b8,#b8b8b8)] bg-[length:100%_1px] bg-[position:0_9px] bg-no-repeat"></span>墙在基础锚固区内左侧水平分布钢筋排数</div><div class="flex-1 pl-[2px]">间距500</div></div>
          <div class="flex h-[19px] border-b border-[#bcbcbc]"><div class="w-[23px] shrink-0 border-r border-[#bcbcbc] bg-linear-to-b from-[#f7f6ef] to-[#e6e4d6] text-center">26</div><div class="flex w-[400px] shrink-0 border-r border-[#bcbcbc] bg-[#ffffe0]"><span class="ml-[7px] mr-[5px] h-full w-[17px] shrink-0 border-l border-[#b8b8b8] bg-[linear-gradient(#b8b8b8,#b8b8b8)] bg-[length:100%_1px] bg-[position:0_9px] bg-no-repeat"></span>墙在基础锚固区内右侧水平分布钢筋排数</div><div class="flex-1 pl-[2px]">间距500</div></div>
          <div class="flex h-[19px] border-b border-[#bcbcbc]"><div class="w-[23px] shrink-0 border-r border-[#bcbcbc] bg-linear-to-b from-[#f7f6ef] to-[#e6e4d6] text-center">27</div><div class="flex w-[400px] shrink-0 overflow-hidden border-r border-[#bcbcbc] bg-[#ffffe0]"><span class="ml-[7px] mr-[5px] h-full w-[17px] shrink-0 border-l border-[#b8b8b8] bg-[linear-gradient(#b8b8b8,#b8b8b8)] bg-[length:100%_1px] bg-[position:0_9px] bg-no-repeat"></span><span class="-mt-px">暗梁/边框梁/梁纵筋与墙水平钢筋的距离在数值范围内不计算水平钢</span></div><div class="flex-1 pl-[2px]">s/2</div></div>
          <div class="flex h-[19px] border-b border-[#bcbcbc]"><div class="w-[23px] shrink-0 border-r border-[#bcbcbc] bg-linear-to-b from-[#f7f6ef] to-[#e6e4d6] text-center">28</div><div class="flex w-[400px] shrink-0 border-r border-[#bcbcbc] bg-[#ffffe0]"><span class="ml-[7px] mr-[5px] h-full w-[17px] shrink-0 border-l border-[#b8b8b8] bg-[linear-gradient(#b8b8b8,#b8b8b8)] bg-[length:100%_1px] bg-[position:0_9px] bg-no-repeat"></span>水平钢筋根数计算方式</div><div class="flex-1 pl-[2px]">向上取整+1</div></div>
          <div class="flex h-[4px]"><div class="w-[23px] shrink-0 border-r border-[#bcbcbc] bg-[#f7f6ef]"></div><div class="flex w-[400px] shrink-0 border-r border-[#bcbcbc] bg-[#ffffe0]"><span class="ml-[7px] h-full w-px bg-[#b8b8b8]"></span></div></div>
        </div>
        <div class="flex min-h-0 w-[20px] shrink-0 flex-col border-l border-[#bcbcbc] bg-[#f5f4ec] px-[1px] pt-[2px]">
          <div class="flex h-[15px] w-[16px] shrink-0 items-center justify-center rounded-[2px] border border-white bg-linear-to-b from-[#dce6fd] to-[#b8cbf8]"><svg class="h-[5px] w-[8px]" viewBox="0 0 8 5"><path d="M0 5 4 0l4 5H6L4 2.500 2 5z" fill="#4d6185"/></svg></div>
          <div class="mt-[2px] flex h-[122px] w-[16px] shrink-0 items-center justify-center rounded-[2px] border border-white bg-linear-to-r from-[#cddafc] to-[#b8cbf8]"><span class="h-[7px] w-[7px] border-y border-[#f0f4ff] bg-[linear-gradient(#f0f4ff,#f0f4ff)] bg-[length:100%_1px] bg-[position:0_2px] bg-no-repeat"></span></div>
          <div class="mt-[156px] flex h-[15px] w-[16px] shrink-0 items-center justify-center rounded-[2px] border border-white bg-linear-to-b from-[#dce6fd] to-[#b8cbf8]"><svg class="h-[5px] w-[8px]" viewBox="0 0 8 5"><path d="M0 0 4 5l4-5H6L4 2.500 2 0z" fill="#4d6185"/></svg></div>
        </div>
      </div>
      <div class="mt-[3px] leading-[18px]">提示信息：</div>
      <div class="ml-[377px] mt-[37px] flex gap-[15px]">
        <div class="flex h-[23px] w-[72px] items-center justify-center rounded-[3px] border border-[#003c74] bg-linear-to-b from-white to-[#e6e3d6] shadow-[inset_0_0_0_1px_#b8d0f0]"><span class="flex h-[17px] w-[66px] items-center justify-center border border-dotted border-[#404040]">确定</span></div>
        <div class="flex h-[23px] w-[72px] items-center justify-center rounded-[3px] border border-[#003c74] bg-linear-to-b from-white to-[#e6e3d6]">取消</div>
      </div>
    </div>
  </div>

  <!-- hand-drawn annotations over the screenshot -->
  <svg class="pointer-events-none absolute inset-0 h-[859px] w-[1040px]" viewBox="0 0 1040 859">
    <ellipse cx="622" cy="283" rx="29" ry="12" fill="none" stroke="#e86a6a" stroke-width="1.200"/>
    <ellipse cx="302" cy="760" rx="31" ry="16" fill="none" stroke="#e86a6a" stroke-width="1.200"/>
    <path d="M307.500 741 586 316 584 312 593 308 592 319 589 318 309 742Z" fill="#ff4040"/>
  </svg>
</div>
</body>
</html>
